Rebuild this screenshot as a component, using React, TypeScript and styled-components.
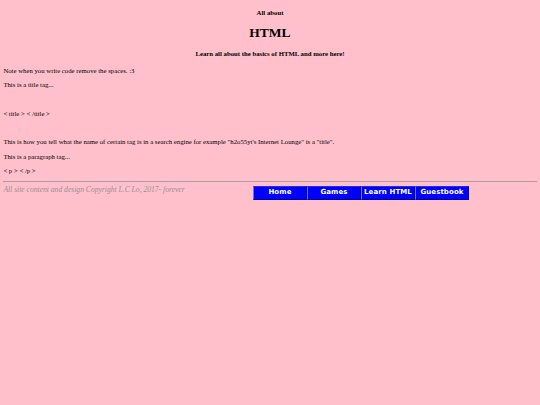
import React from "react";
import styled, { createGlobalStyle } from "styled-components";

const Global = createGlobalStyle`
  html, body {
    background: #ffc0cb;
  }
  body {
    margin: 0 3.375px 3.375px;
    font-family: "Liberation Serif", "Times New Roman", serif;
    font-size: 6.75px;
    line-height: 7.6px;
    color: #000;
  }
`;

const Page = styled.div`
  padding-top: 0.01px;
`;

const Kicker = styled.h4`
  text-align: center;
  font-size: 1em;
  line-height: 7.76px;
  font-weight: bold;
  margin: 8.5px 0 9px;
`;

const Title = styled.h1`
  text-align: center;
  font-size: 2em;
  line-height: 15.5px;
  font-weight: bold;
  margin: 9px 0;
`;

const Para = styled.p`
  margin: 6.75px 0;
`;

const Rule = styled.hr`
  margin: 3.9px 0 3.6px;
  border: none;
  border-top: 1px solid #a8a0a2;
  height: 0;
`;

const Footer = styled.div`
  display: flex;
  align-items: flex-start;
`;

const Copyright = styled.div`
  width: 249.6px;
  flex: none;
  font-style: italic;
  font-size: 7.6px;
  color: #9a8f91;
  line-height: 8.7px;
`;

const Nav = styled.nav`
  display: flex;
`;

const NavButton = styled.a`
  box-sizing: border-box;
  width: 54px;
  height: 14px;
  display: flex;
  align-items: center;
  justify-content: center;
  background: #0000ff;
  color: #fff;
  text-decoration: none;
  font-family: "DejaVu Sans", Verdana, sans-serif;
  font-weight: bold;
  font-size: 7px;
  line-height: 1;
  letter-spacing: 0.1px;
  border-top: 1px solid #2a2ad8;
  border-left: 1px solid #6a6af0;
  border-right: 1px solid #00008a;
  border-bottom: 1px solid #00008a;
`;

const links = ["Home", "Games", "Learn HTML", "Guestbook"];

export default function App() {
  return (
    <Page>
      <Global />
      <Kicker>All about</Kicker>
      <Title>HTML</Title>
      <Kicker>Learn all about the basics of HTML and more here!</Kicker>
      <Para>Note when you write code remove the spaces. :3</Para>
      <Para>This is a title tag...</Para>
      <br />
      <Para>&lt; title &gt; &lt; /title &gt;</Para>
      <br />
      <Para>
        This is how you tell what the name of certain tag is in a search engine
        for example "h2o55yt's Internet Lounge" is a "title".
      </Para>
      <Para>This is a paragraph tag...</Para>
      <Para>&lt; p &gt; &lt; /p &gt;</Para>
      <Rule />
      <Footer>
        <Copyright>All site content and design Copyright L.C Lo, 2017- forever</Copyright>
        <Nav>
          {links.map((l) => (
            <NavButton key={l} href="#">
              {l}
            </NavButton>
          ))}
        </Nav>
      </Footer>
    </Page>
  );
}
